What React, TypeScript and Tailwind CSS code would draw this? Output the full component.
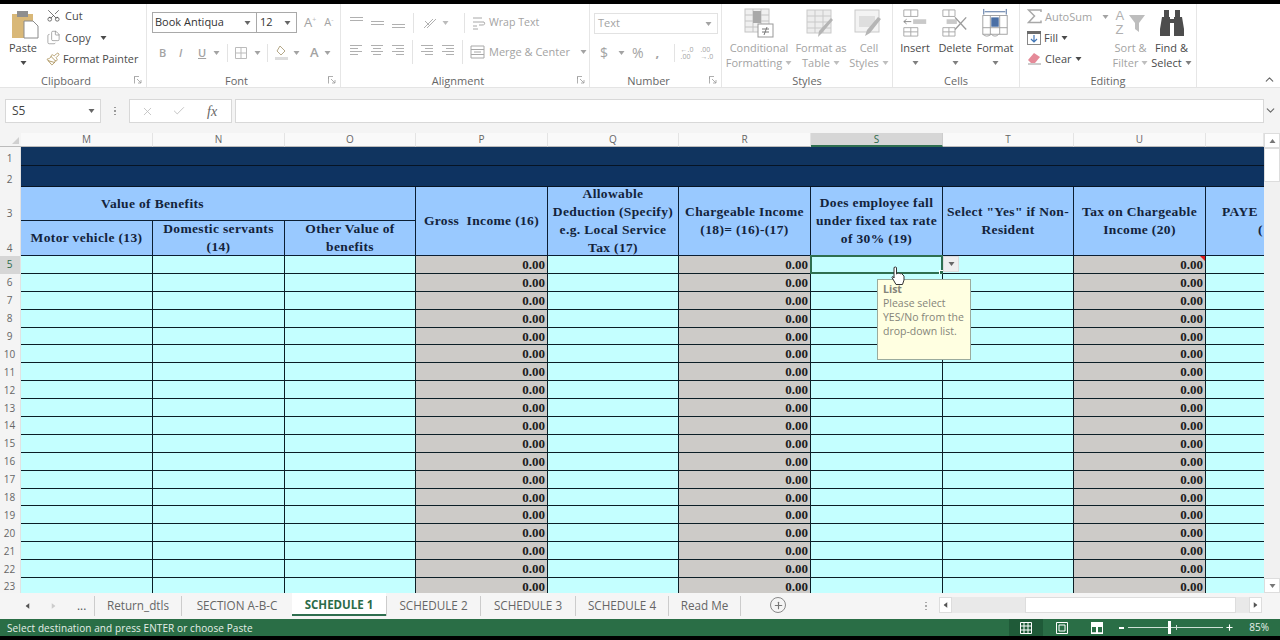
import { Scissors, Files, Paintbrush, ChevronUp, ChevronDown, Plus, X, Check } from 'lucide-react';

const serif = "font-['Liberation_Serif',serif]";
const muted = 'text-[#a3a3a3]';
const dark = 'text-[#4a4a4a]';

const Caret = ({ className = '' }: { className?: string }) => (
  <svg width="7" height="4" viewBox="0 0 7 4" className={`shrink-0 ${className}`}>
    <path d="M0.5 0h6L3.5 4z" fill="currentColor" />
  </svg>
);

const Launcher = () => (
  <svg width="8" height="8" viewBox="0 0 8 8" className="text-[#9a9a9a]">
    <path d="M0.5 3V0.5H5M0.5 0.5v7M3 3l4 4M7 4v3H4" fill="none" stroke="currentColor" strokeWidth="0.8" />
  </svg>
);

// horizontal text lines, used by all the alignment buttons
const Lines = ({ widths, align = 'left', y = 0 }: { widths: number[]; align?: 'left' | 'center' | 'right'; y?: number }) => (
  <svg width="14" height="14" viewBox="0 0 14 14" className="text-[#b0b0b0]">
    {widths.map((w, i) => {
      const x = align === 'left' ? 1 : align === 'right' ? 13 - w : 7 - w / 2;
      return <rect key={i} x={x} y={y + i * 3} width={w} height="1" fill="currentColor" />;
    })}
  </svg>
);

const Sep = ({ h = 'h-[24px]' }: { h?: string }) => <div className={`w-px ${h} bg-[#e3e3e3] shrink-0`} />;

function Group({ w, label, launcher, children }: { w: string; label: string; launcher?: boolean; children: React.ReactNode }) {
  return (
    <div className={`${w} shrink-0 h-full flex flex-col border-r border-[#e6e6e6] relative`}>
      <div className="h-[69px] flex">{children}</div>
      <div className={`h-[14px] flex items-end justify-center text-[11px] leading-[13px] text-[#666] ${launcher ? 'pr-[14px]' : ''}`}>{label}</div>
      {launcher && (
        <div className="absolute right-[4px] bottom-[3px]">
          <Launcher />
        </div>
      )}
    </div>
  );
}

function BigBtn({ icon, lines, w, off, caretLine }: { icon: React.ReactNode; lines: string[]; w: string; off?: boolean; caretLine?: boolean }) {
  return (
    <div className={`${w} shrink-0 flex flex-col items-center ${off ? muted : dark} text-[11px] leading-[15px]`}>
      <div className="h-[30px] mt-[4px] flex items-center justify-center">{icon}</div>
      <div className="mt-[2px] whitespace-nowrap">{lines[0]}</div>
      <div className="whitespace-nowrap flex items-center gap-[3px] h-[15px]">
        {lines[1]}
        {caretLine && <Caret className="opacity-70" />}
      </div>
    </div>
  );
}

const PasteIcon = () => (
  <svg width="28" height="29" viewBox="0 0 28 29">
    <rect x="1" y="4" width="21" height="24" fill="#d9b878" />
    <rect x="6" y="1" width="11" height="6" fill="#8f8f8f" />
    <path d="M13 11h9l5 5v12H13z" fill="#fff" stroke="#8a8a8a" />
  </svg>
);

const CondIcon = () => (
  <svg width="30" height="30" viewBox="0 0 30 30" fill="none" stroke="#c4c4c4">
    <rect x="1" y="1" width="24" height="23" fill="#f0f0f0" />
    <path d="M1 7h24M1 13h24M1 19h24M9 1v23M17 1v23" />
    <rect x="9" y="3" width="8" height="12" fill="#a9a9a9" stroke="none" />
    <rect x="14" y="16" width="15" height="13" fill="#fff" stroke="#999" />
    <path d="M18 21h7M18 24h7M23 19l-3 8" stroke="#777" />
  </svg>
);

const TableIcon = () => (
  <svg width="30" height="30" viewBox="0 0 30 30" fill="none" stroke="#c9c9c9">
    <rect x="1" y="2" width="24" height="23" fill="#ededed" />
    <path d="M1 8h24M1 14h24M1 20h24M9 2v23M17 2v23" />
    <path d="M27 12L16 25l-4 4 1-6 12-13z" fill="#b5b5b5" stroke="none" />
  </svg>
);

const StylesIcon = () => (
  <svg width="30" height="30" viewBox="0 0 30 30" fill="none" stroke="#c9c9c9">
    <rect x="1" y="2" width="24" height="22" fill="#f3f3f3" />
    <rect x="5" y="8" width="16" height="11" fill="#dedede" stroke="none" />
    <path d="M27 11L16 25l-5 3 2-6 11-13z" fill="#b5b5b5" stroke="none" />
  </svg>
);

const InsertIcon = () => (
  <svg width="26" height="28" viewBox="0 0 26 30" fill="none" stroke="#a8a8a8">
    <path d="M1 1h15v7H1zM8.5 1v7M1 20h15v9H1zM8.5 20v9M1 24.500h15" />
    <rect x="11" y="11" width="14" height="5" fill="#c9c9c9" stroke="none" />
    <path d="M9 13.500H1M4 11l-3 2.500L4 16" stroke="#888" />
  </svg>
);

const DeleteIcon = () => (
  <svg width="28" height="28" viewBox="0 0 28 30" fill="none" stroke="#a8a8a8">
    <path d="M1 1h13v7H1zM7.500 1v7M1 20h13v9H1zM7.500 20v9M1 24.500h13" />
    <rect x="5" y="11" width="11" height="5" fill="#c9c9c9" stroke="none" />
    <path d="M14 9l12 13M26 9L14 22" stroke="#9b9b9b" strokeWidth="1.500" />
  </svg>
);

const FormatIcon = () => (
  <svg width="28" height="30" viewBox="0 0 28 32" fill="none" stroke="#a0a0a0">
    <path d="M2 1v6M26 1v6M3 4h22" stroke="#4a6a9a" />
    <rect x="1" y="8" width="26" height="20" fill="#fff" />
    <path d="M9 8v20M19 8v20M1 21h26" />
    <rect x="10" y="10" width="8" height="10" fill="#4a6fa5" stroke="none" />
    <path d="M1 28q4 4 9 0q4 4 8 0" />
  </svg>
);

const SortIcon = () => (
  <div className="w-[30px] h-[30px] flex">
    <div className="w-[12px] font-['Liberation_Sans',sans-serif] text-[13px] leading-[14px] text-[#b0b0b0] pt-[1px]">
      A
      <br />Z
    </div>
    <svg width="18" height="26" viewBox="0 0 18 26" className="mt-[4px]">
      <path d="M1 3h16l-6 8v9l-4-3v-6z" fill="#bdbdbd" />
    </svg>
  </div>
);

const Binoculars = () => (
  <svg width="26" height="28" viewBox="0 0 26 28" fill="#4d4d4d">
    <rect x="5" y="1" width="5" height="7" />
    <rect x="16" y="1" width="5" height="7" />
    <path d="M3 8h8v2h4V8h8l2 12v7H15V14h-4v13H1v-7z" />
  </svg>
);

const Row = ({ children, className = '' }: { children: React.ReactNode; className?: string }) => (
  <div className={`flex items-center ${className}`}>{children}</div>
);

function Ribbon() {
  return (
    <div className="h-[84px] bg-white flex border-b border-[#e4e4e4] text-[11px] shrink-0">
      <Group w="w-[147px]" label="Clipboard" launcher>
        <div className={`w-[46px] shrink-0 flex flex-col items-center ${dark} leading-[15px]`}>
          <div className="mt-[6px] h-[30px] ml-[3px]">
            <PasteIcon />
          </div>
          <div>Paste</div>
          <Caret className="mt-[6px]" />
        </div>
        <div className={`flex flex-col ${dark} leading-[21px] pt-[2px]`}>
          <Row className="gap-[4px] -mt-[1px] mb-[1px]">
            <Scissors size={15} strokeWidth={1.2} className="-rotate-90" />
            Cut
          </Row>
          <Row className="gap-[4px]">
            <Files size={15} strokeWidth={1.1} className="text-[#888]" />
            Copy
            <Caret className="ml-[5px]" />
          </Row>
          <Row className="gap-[3px]">
            <Paintbrush size={14} strokeWidth={1.4} className="text-[#a58a4f]" />
            <span className="text-[10.800px]">Format Painter</span>
          </Row>
        </div>
      </Group>

      <Group w="w-[194px]" label="Font" launcher>
        <div className="flex flex-col pl-[5px] pt-[8px]">
          <Row>
            <div className="w-[105px] h-[21px] border border-[#a9a9a9] flex items-center justify-between pl-[2px] pr-[5px] text-[#333]">
              Book Antiqua
              <Caret className="text-[#666]" />
            </div>
            <div className="w-[40px] h-[21px] border border-l-0 border-[#a9a9a9] flex items-center justify-between pl-[3px] pr-[5px] text-[#333]">
              12
              <Caret className="text-[#666]" />
            </div>
            <span className={`ml-[7px] text-[13px] ${muted}`}>A</span>
            <span className="text-[7px] leading-[7px] self-start mt-[4px] text-[#bbb]">+</span>
            <span className={`ml-[8px] text-[11px] ${muted}`}>A</span>
            <span className="text-[7px] leading-[7px] self-start mt-[4px] text-[#bbb]">-</span>
          </Row>
          <Row className={`mt-[10px] ${muted} font-semibold`}>
            <span className="w-[20px] pl-[7px]">B</span>
            <span className="w-[22px] pl-[7px] italic">I</span>
            <span className="w-[19px] pl-[4px] underline">U</span>
            <Caret className="mr-[7px]" />
            <Sep h="h-[18px]" />
            <svg width="14" height="14" viewBox="0 0 14 14" className="ml-[6px]" fill="none" stroke="#bbb">
              <path d="M1.500 1.500h11v11h-11zM7 1.500v11M1.500 7h11" />
            </svg>
            <Caret className="ml-[6px] mr-[6px]" />
            <Sep h="h-[18px]" />
            <svg width="16" height="15" viewBox="0 0 16 15" className="ml-[6px]">
              <path d="M6 1l5 5-4 4-4-4z" fill="none" stroke="#b5a888" />
              <rect x="1" y="12" width="13" height="3" fill="#ddd" />
            </svg>
            <Caret className="ml-[3px]" />
            <span className="ml-[10px] text-[13px]">A</span>
            <Caret className="ml-[5px]" />
          </Row>
        </div>
      </Group>

      <Group w="w-[249px]" label="Alignment" launcher>
        <div className="flex flex-col pl-[8px] pt-[9px]">
          <Row className="gap-[7px]">
            <Lines widths={[13, 13]} y={1} />
            <Lines widths={[13, 13]} y={5} />
            <Lines widths={[13, 13]} y={8} />
            <div className="ml-[1px]">
              <Sep h="h-[20px]" />
            </div>
            <svg width="16" height="14" viewBox="0 0 16 14" fill="none" stroke="#b0b0b0" className="ml-[1px]">
              <path d="M2 12L11 3M5 12l9-9M3 5l4 4" />
            </svg>
            <Caret className="text-[#bbb] -ml-[3px]" />
            <div className="ml-[8px]">
              <Sep h="h-[20px]" />
            </div>
            <Row className={`gap-[3px] ${muted}`}>
              <svg width="14" height="14" viewBox="0 0 14 14" fill="none" stroke="#a8a8a8">
                <path d="M1 2h9M1 6h11q2 3-2 3H7M1 10h4M1 13h5" />
              </svg>
              <span className="text-[10.600px]">Wrap Text</span>
            </Row>
          </Row>
          <Row className="gap-[7px] mt-[7px]">
            <Lines widths={[12, 8, 12, 8]} align="left" />
            <Lines widths={[12, 8, 12, 8]} align="center" />
            <Lines widths={[12, 8, 12, 8]} align="right" />
            <Sep />
            <Lines widths={[12, 8, 12, 8]} align="right" />
            <Lines widths={[12, 8, 12, 8]} align="right" />
            <Sep />
            <Row className={`gap-[4px] ${muted}`}>
              <svg width="15" height="14" viewBox="0 0 15 14" fill="none" stroke="#a8a8a8">
                <path d="M1 1h13v12H1zM1 4.500h13M1 9.500h13M4 7h7" />
              </svg>
              Merge &amp; Center
              <Caret className="ml-[6px]" />
            </Row>
          </Row>
        </div>
      </Group>

      <Group w="w-[132px]" label="Number" launcher>
        <div className={`flex flex-col pl-[4px] pt-[9px] ${muted}`}>
          <div className="w-[124px] h-[21px] border border-[#e2e2e2] flex items-center justify-between pl-[3px] pr-[5px]">
            Text
            <Caret />
          </div>
          <Row className="mt-[8px]">
            <span className="text-[14px] w-[20px] pl-[6px]">$</span>
            <Caret className="ml-[4px]" />
            <span className="text-[14px] ml-[7px]">%</span>
            <span className="text-[13px] font-bold ml-[12px] w-[18px]">,</span>
            <Sep h="h-[18px]" />
            <span className="text-[7px] leading-[7px] ml-[6px]">
              ←.0
              <br />
              .00
            </span>
            <span className="text-[7px] leading-[7px] ml-[7px]">
              .00
              <br />
              →.0
            </span>
          </Row>
        </div>
      </Group>

      <Group w="w-[171px]" label="Styles">
        <BigBtn w="w-[74px]" off icon={<CondIcon />} lines={['Conditional', 'Formatting']} caretLine />
        <BigBtn w="w-[50px]" off icon={<TableIcon />} lines={['Format as', 'Table']} caretLine />
        <BigBtn w="w-[46px]" off icon={<StylesIcon />} lines={['Cell', 'Styles']} caretLine />
      </Group>

      <Group w="w-[127px]" label="Cells">
        <div className="w-[2px]" />
        <BigBtn w="w-[40px]" icon={<InsertIcon />} lines={['Insert', '']} caretLine />
        <BigBtn w="w-[40px]" icon={<DeleteIcon />} lines={['Delete', '']} caretLine />
        <BigBtn w="w-[40px]" icon={<FormatIcon />} lines={['Format', '']} caretLine />
      </Group>

      <div className="w-[177px] shrink-0 h-full flex flex-col border-r border-[#e6e6e6]">
        <div className="h-[69px] flex">
          <div className={`w-[90px] shrink-0 flex flex-col pl-[7px] ${dark} leading-[21px] pt-[2px]`}>
            <Row className={`gap-[3px] ${muted}`}>
              <svg width="15" height="15" viewBox="0 0 15 15" fill="none" stroke="#a8a8a8" strokeWidth="1.500">
                <path d="M14 3V1H1.500l6 6-6 6.500H14v-2" />
              </svg>
              AutoSum
              <Caret className="ml-[7px]" />
            </Row>
            <Row className="gap-[3px]">
              <svg width="14" height="14" viewBox="0 0 14 14" fill="none">
                <rect x="0.500" y="0.500" width="13" height="13" fill="#fff" stroke="#888" />
                <rect x="0" y="0" width="14" height="3" fill="#6b6b6b" />
                <path d="M7 4v7M4 8l3 3 3-3" stroke="#3f74b5" strokeWidth="1.200" />
              </svg>
              Fill
              <Caret />
            </Row>
            <Row className="gap-[3px]">
              <svg width="15" height="13" viewBox="0 0 15 13">
                <path d="M1 8l6-7 6 4-5 6H4z" fill="#e58a98" />
                <path d="M1 12h13" stroke="#999" />
              </svg>
              Clear
              <Caret />
            </Row>
          </div>
          <BigBtn w="w-[41px]" off icon={<SortIcon />} lines={['Sort &', 'Filter']} caretLine />
          <BigBtn w="w-[41px]" icon={<Binoculars />} lines={['Find &', 'Select']} caretLine />
        </div>
        <div className="h-[14px] flex items-end justify-center text-[11px] leading-[13px] text-[#666]">Editing</div>
      </div>

      <div className="flex-1 flex items-end justify-end pr-[4px] pb-[1px] text-[#666]">
        <ChevronUp size={13} strokeWidth={2} />
      </div>
    </div>
  );
}

function FormulaBar() {
  return (
    <div className="h-[45px] bg-[#f4f4f4] pt-[11px] shrink-0">
      <div className="h-[24px] flex items-stretch pl-[5px] text-[12px]">
        <div className="w-[96px] bg-white border border-[#d8d8d8] flex items-center justify-between pl-[6px] pr-[5px] text-[#444]">
          S5
          <Caret className="text-[#666]" />
        </div>
        <div className="w-[28px] flex flex-col items-center justify-center gap-[2px]">
          <div className="w-[1.500px] h-[1.500px] bg-[#999]" />
          <div className="w-[1.500px] h-[1.500px] bg-[#999]" />
          <div className="w-[1.500px] h-[1.500px] bg-[#999]" />
        </div>
        <div className="w-[103px] bg-white border border-[#d8d8d8] flex items-center pl-[11px] text-[#bbb]">
          <X size={13} strokeWidth={1.500} />
          <Check size={14} strokeWidth={1.500} className="ml-[18px]" />
          <span className={`ml-[21px] italic text-[#666] text-[14px] ${serif}`}>fx</span>
        </div>
        <div className="ml-[3px] flex-1 bg-white border border-[#d8d8d8] mr-[16px]" />
        <div className="absolute right-[3px] top-[104px] text-[#666]">
          <ChevronDown size={13} strokeWidth={2} />
        </div>
      </div>
    </div>
  );
}

const columns = ['M', 'N', 'O', 'P', 'Q', 'R', 'S', 'T', 'U', ''];
const grayCols = [3, 5, 8];
const rowNums = Array.from({ length: 19 }, (_, i) => i + 5);

const headCell = `bg-[#99c9ff] border-r border-b border-[#0b1e33] flex items-center justify-center text-center ${serif} font-bold text-[13.500px] leading-[18px] text-[#13233b] tracking-[0.35px] whitespace-nowrap overflow-hidden`;
const rowHead = 'bg-[#f4f4f4] text-[10px] text-[#666] flex items-center justify-center pr-[1px] border-r border-[#e2e2e2]';

function Sheet() {
  return (
    <div className="h-[460px] flex overflow-hidden bg-white shrink-0">
      <div className="w-[1264px] shrink-0 overflow-hidden">
        <div className="grid grid-cols-[21px_132px_132px_131px_132px_131px_132px_132px_131px_132px_58px] grid-rows-[14px_19px_21px_34px_35px] auto-rows-[17.900px]">
          {/* column letters */}
          <div className="bg-[#f4f4f4] flex items-end justify-end pr-[2px] pb-[2px] border-b border-[#bbb]">
            <svg width="7" height="7" viewBox="0 0 7 7">
              <path d="M7 0v7H0z" fill="#d0d0d0" />
            </svg>
          </div>
          {columns.map((c, i) => (
            <div
              key={i}
              className={`text-[10px] flex items-center justify-center border-r ${
                c === 'S'
                  ? 'bg-[#d6d6d6] text-[#2d6a4a] border-b-2 border-b-[#2f6f50] border-r-[#ccc]'
                  : 'bg-[#f9f9f9] text-[#666] border-b border-b-[#bbb] border-r-[#e4e4e4]'
              }`}
            >
              {c}
            </div>
          ))}

          {/* dark title rows */}
          <div className={`${rowHead} pt-[3px]`}>1</div>
          <div className="col-span-10 bg-[#10345f] border-b border-[#061424]" />
          <div className={`${rowHead} pt-[5px]`}>2</div>
          <div className="col-span-10 bg-[#0e3361] border-b border-[#061424]" />

          {/* rows 3 and 4 hold the column titles */}
          <div className={`${rowHead} items-end`}>3</div>
          <div className={`${headCell} col-span-3 pr-[131px]`}>Value of Benefits</div>
          <div className={`${headCell} row-span-2`}>Gross&nbsp; Income (16)</div>
          <div className={`${headCell} row-span-2`}>
            <span>
              Allowable
              <br />
              Deduction (Specify)
              <br />
              e.g. Local Service
              <br />
              Tax (17)
            </span>
          </div>
          <div className={`${headCell} row-span-2`}>
            <span>
              Chargeable Income
              <br />
              (18)= (16)-(17)
            </span>
          </div>
          <div className={`${headCell} row-span-2`}>
            <span>
              Does employee fall
              <br />
              under fixed tax rate
              <br />
              of 30% (19)
            </span>
          </div>
          <div className={`${headCell} row-span-2`}>
            <span>
              Select "Yes" if Non-
              <br />
              Resident
            </span>
          </div>
          <div className={`${headCell} row-span-2`}>
            <span>
              Tax on Chargeable
              <br />
              Income (20)
            </span>
          </div>
          <div className={`${headCell} row-span-2 !justify-start !text-left !border-r-0`}>
            <span className="pl-[16px]">
              PAYE
              <br />
              <span className="pl-[36px]">(</span>
            </span>
          </div>
          <div className={`${rowHead} items-end`}>4</div>
          <div className={headCell}>Motor vehicle (13)</div>
          <div className={headCell}>
            <span>
              Domestic servants
              <br />
              (14)
            </span>
          </div>
          <div className={headCell}>
            <span>
              Other Value of
              <br />
              benefits
            </span>
          </div>

          {/* data rows */}
          {rowNums.map((n) => (
            <Cells key={n} n={n} />
          ))}
        </div>
      </div>

      <div className="w-[16px] shrink-0 bg-[#f1f1f1] flex flex-col items-center">
        <div className="h-[15px] w-full bg-white border border-[#ddd] flex items-center justify-center text-[#777]">
          <Caret className="rotate-180" />
        </div>
        <div className="h-[34px] w-full bg-white border border-[#ddd]" />
        <div className="flex-1" />
        <div className="h-[15px] w-full bg-white border border-[#ddd] flex items-center justify-center text-[#777]">
          <Caret />
        </div>
      </div>
    </div>
  );
}

function Cells({ n }: { n: number }) {
  const selected = n === 5;
  return (
    <>
      <div className={`${rowHead} ${selected ? '!bg-[#d6d6d6] !text-[#2d6a4a]' : ''}`}>{n}</div>
      {columns.map((c, i) => {
        const gray = grayCols.includes(i);
        const isS = selected && c === 'S';
        return (
          <div
            key={i}
            className={`relative border-b border-[#0b1e26] ${i < 9 ? 'border-r' : ''} ${
              gray ? 'bg-[#cdcbc8]' : 'bg-[#c4ffff]'
            } ${serif} font-bold text-[13px] text-[#1c1c1c] flex items-center justify-end pr-[2px] leading-none`}
          >
            {gray && '0.00'}
            {isS && (
              <>
                <div className="absolute -inset-[1px] border-2 border-[#2f6f50]" />
                <div className="absolute -right-[3px] -bottom-[3px] w-[6px] h-[6px] bg-[#2f6f50] border border-white" />
              </>
            )}
            {selected && c === 'U' && (
              <div className="absolute right-0 top-0 w-0 h-0 border-t-[5px] border-l-[5px] border-t-[#e01b1b] border-l-transparent" />
            )}
          </div>
        );
      })}
    </>
  );
}

function Tabs() {
  const tabs = [
    ['Return_dtls', 'w-[87px]'],
    ['SECTION A-B-C', 'w-[111px]'],
    ['SCHEDULE 1', 'w-[94px]'],
    ['SCHEDULE 2', 'w-[94px]'],
    ['SCHEDULE 3', 'w-[95px]'],
    ['SCHEDULE 4', 'w-[93px]'],
    ['Read Me', 'w-[72px]'],
  ];
  return (
    <div className="h-[26px] bg-[#f5f5f5] flex items-stretch text-[11.700px] text-[#666] shrink-0">
      <div className="w-[94px] shrink-0 flex items-center text-[#555]">
        <Caret className="rotate-90 ml-[24px]" />
        <Caret className="-rotate-90 ml-[19px] text-[#ccc]" />
        <span className="ml-[20px] leading-none">...</span>
      </div>
      {tabs.map(([t, w]) =>
        t === 'SCHEDULE 1' ? (
          <div key={t} className={`${w} shrink-0 flex items-center justify-center bg-white font-bold text-[#2c6b48] border-b-2 border-[#2f6f50] h-[23px] pt-[2px] text-[11.500px]`}>
            {t}
          </div>
        ) : (
          <div key={t} className={`${w} shrink-0 flex items-center justify-center h-[20px] mt-[3px] border-l border-[#ccc]`}>
            {t}
          </div>
        ),
      )}
      <div className="h-[20px] mt-[3px] border-l border-[#ccc]" />
      <div className="w-[16px] h-[16px] ml-[29px] mt-[4px] rounded-full border border-[#888] flex items-center justify-center text-[#777] shrink-0">
        <Plus size={11} strokeWidth={2.500} />
      </div>
      <div className="ml-[139px] w-[2px] flex flex-col justify-center gap-[2px]">
        <div className="h-[1.500px] bg-[#aaa]" />
        <div className="h-[1.500px] bg-[#aaa]" />
        <div className="h-[1.500px] bg-[#aaa]" />
      </div>
      <div className="ml-[12px] w-[13px] h-[16px] mt-[4px] bg-white border border-[#ddd] flex items-center justify-center text-[#555] shrink-0">
        <Caret className="rotate-90" />
      </div>
      <div className="w-[297px] h-[16px] mt-[4px] bg-[#e9e9e9] flex shrink-0">
        <div className="w-[73px]" />
        <div className="w-[211px] bg-white border border-[#ddd]" />
      </div>
      <div className="w-[13px] h-[16px] mt-[4px] bg-white border border-[#ddd] flex items-center justify-center text-[#555] shrink-0">
        <Caret className="-rotate-90" />
      </div>
    </div>
  );
}

function StatusBar() {
  return (
    <div className="h-[17px] bg-[#2a6e46] flex items-center text-[10px] text-[#e6efe9] shrink-0">
      <span className="pl-[7px] pt-[2px] tracking-[0.1px]">Select destination and press ENTER or choose Paste</span>
      <div className="flex-1" />
      <div className="w-[34px] h-full bg-[#1f5a38] flex items-center justify-center">
        <svg width="12" height="12" viewBox="0 0 12 12" fill="none" stroke="#fff">
          <path d="M0.500 0.500h11v11h-11zM4 0.500v11M8 0.500v11M0.500 4h11M0.500 8h11" />
        </svg>
      </div>
      <div className="w-[38px] flex justify-center">
        <svg width="12" height="12" viewBox="0 0 12 12" fill="none" stroke="#fff">
          <path d="M0.500 0.500h11v11h-11zM3 3h6v6H3z" />
        </svg>
      </div>
      <div className="w-[32px] flex justify-center">
        <svg width="12" height="12" viewBox="0 0 12 12">
          <path d="M0 0h12v12H0z" fill="#fff" />
          <path d="M1 7h4V1H1zM7 7h4V1H7z" fill="#2a6e46" transform="translate(0 4) scale(1 0.9)" />
        </svg>
      </div>
      <div className="w-[5px] h-[2px] bg-white ml-[6px]" />
      <div className="ml-[4px] w-[95px] h-px bg-[#cfe0d6] relative">
        <div className="absolute left-[40px] -top-[6px] w-[3px] h-[13px] bg-white" />
        <div className="absolute left-[48px] -top-[2px] w-px h-[5px] bg-[#cfe0d6]" />
      </div>
      <Plus size={9} strokeWidth={3} className="text-white ml-[2px]" />
      <span className="w-[46px] text-right pr-[11px]">85%</span>
    </div>
  );
}

export default function App() {
  return (
    <div className="w-[1280px] h-[640px] overflow-hidden bg-black flex flex-col font-['Open_Sans',sans-serif] relative">
      <div className="h-[4px] shrink-0" />
      <Ribbon />
      <FormulaBar />
      <Sheet />
      <Tabs />
      <StatusBar />

      {/* things lying over the grid */}
      <div className="absolute left-[943px] top-[256px] w-[16px] h-[16px] bg-[#eeeeee] border border-[#dcdcdc] flex items-center justify-center text-[#666]">
        <Caret />
      </div>
      <div className="absolute left-[877px] top-[279px] w-[94px] h-[81px] bg-[#ffffe1] border border-[#9bab9d] text-[10.500px] leading-[14px] text-[#85857a] pl-[5px] pt-[2px]">
        <div className="font-bold">List</div>
        <div>
          Please select
          <br />
          YES/No from the
          <br />
          drop-down list.
        </div>
      </div>
      <svg width="14" height="20" viewBox="0 0 14 20" className="absolute left-[891px] top-[266px]">
        <path d="M3 1.500q1.500-1 2.500 0V8l1-.5q1-.5 1.500 0 1-.5 1.500.2 1-.5 1.500.3l2 2V14l-1.500 4.500H5L1 11.500q0-1.500 1.500-.5L3 12z" fill="#fff" stroke="#333" strokeWidth="1" />
      </svg>
    </div>
  );
}
